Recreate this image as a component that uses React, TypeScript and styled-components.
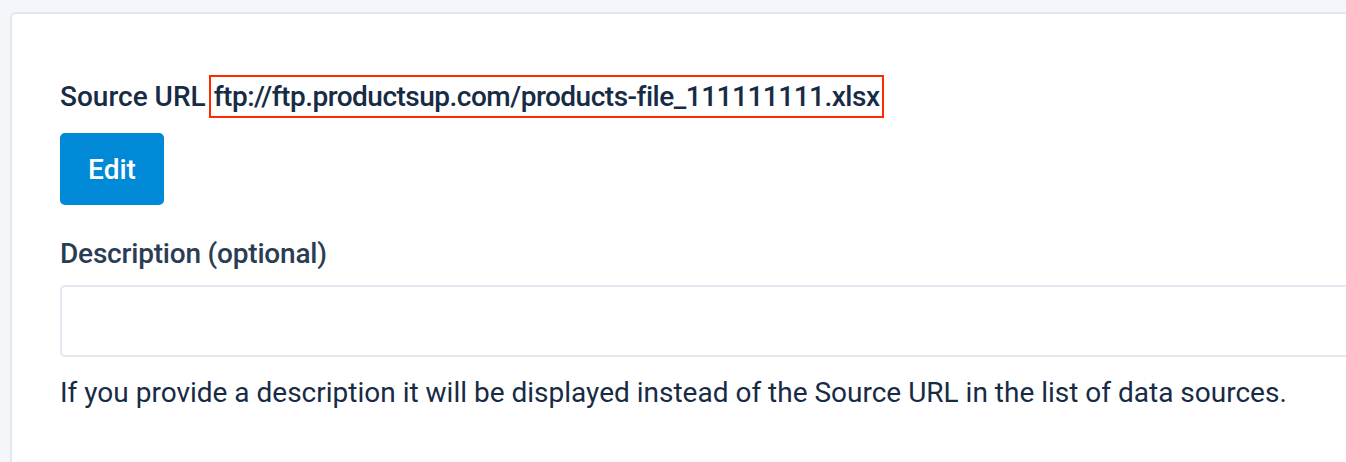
import React from 'react'
import styled, { createGlobalStyle } from 'styled-components'

const GlobalStyle = createGlobalStyle`
  html, body {
    margin: 0;
    padding: 0;
    background: #f4f6fa;
    font-family: Roboto, "Liberation Sans", sans-serif;
    overflow: hidden;
  }
`

const Page = styled.div`
  padding: 12px 0 0 10px;
  height: 462px;
  box-sizing: border-box;
`

const Card = styled.div`
  margin-right: -20px;
  height: 100%;
  box-sizing: border-box;
  background: #ffffff;
  border: 2px solid #e2e8f0;
  border-right: none;
  border-bottom: none;
  border-radius: 6px 0 0 0;
  padding: 61px 0 0 48px;
`

const SourceRow = styled.div`
  display: flex;
  align-items: center;
  height: 43px;
  font-size: 28px;
  font-weight: 500;
  line-height: 39px;
  color: #172b45;
  white-space: nowrap;
`

const Highlight = styled.span`
  margin-left: 3px;
  padding: 0 3px 0 3px;
  line-height: 39px;
  letter-spacing: -0.5px;
  border: 2px solid #ff2a00;
`

const Button = styled.button`
  display: block;
  margin-top: 15px;
  width: 104px;
  height: 72px;
  padding: 0;
  border: none;
  border-radius: 5px;
  background: #0089d6;
  color: #ffffff;
  font-family: inherit;
  font-size: 28px;
  font-weight: 500;
  cursor: pointer;
`

const Label = styled.div`
  margin-top: 32px;
  font-size: 28px;
  font-weight: 500;
  line-height: 33px;
  letter-spacing: -0.2px;
  color: #2b3d54;
`

const Input = styled.input`
  display: block;
  margin-top: 15px;
  width: 100%;
  height: 72px;
  box-sizing: border-box;
  border: 2px solid #e2e8f0;
  border-right: none;
  border-radius: 5px 0 0 5px;
  background: #ffffff;
  outline: none;
`

const Help = styled.p`
  margin: 19px 0 0;
  font-size: 28px;
  line-height: 33px;
  color: #172b45;
  white-space: nowrap;
`

export default function App() {
  return (
    <>
      <GlobalStyle />
      <Page>
        <Card>
          <SourceRow>
            Source URL
            <Highlight>ftp://ftp.productsup.com/products-file_111111111.xlsx</Highlight>
          </SourceRow>
          <Button>Edit</Button>
          <Label>Description (optional)</Label>
          <Input type="text" />
          <Help>
            If you provide a description it will be displayed instead of the Source URL in the list of
            data sources.
          </Help>
        </Card>
      </Page>
    </>
  )
}
